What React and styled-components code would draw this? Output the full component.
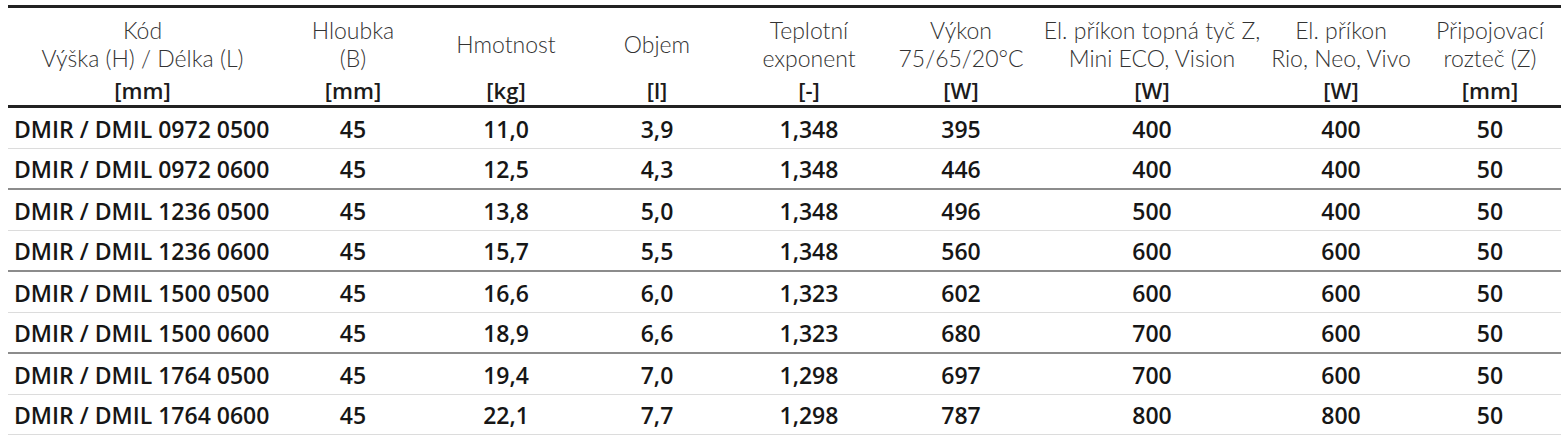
import styled, { createGlobalStyle } from "styled-components";

const GlobalStyle = createGlobalStyle`
  html, body {
    margin: 0;
    padding: 0;
    background: #ffffff;
    overflow: hidden;
  }
  body {
    font-family: "Open Sans", "Noto Sans", sans-serif;
    color: #1b1b1b;
  }
`;

const Wrapper = styled.div`
  padding: 5px 0 0 8px;
  width: 1561px;
  box-sizing: border-box;
`;

const Table = styled.table`
  width: 1559px;
  table-layout: fixed;
  border-collapse: collapse;
  border-top: 3px solid #222;
`;

const NameCell = styled.th`
  height: 71px;
  padding: 0 2px;
  font-family: "Lato", "Open Sans", sans-serif;
  font-weight: 300;
  font-size: 23px;
  line-height: 28px;
  color: #333;
  text-align: center;
  vertical-align: middle;
  white-space: nowrap;
`;

const UnitCell = styled.th`
  height: 22px;
  padding: 0 4px 4px;
  font-weight: 600;
  font-size: 22px;
  line-height: 22px;
  color: #1b1b1b;
  text-align: center;
  vertical-align: middle;
  border-bottom: 3px solid #222;
`;

const Row = styled.tr`
  border-bottom: ${(p) => (p.$group ? "2px solid #8c8c8c" : "1px solid #dcdcdc")};
`;

const Cell = styled.td`
  height: 37.5px;
  padding: 2px 6px 0;
  font-weight: 600;
  font-size: 23px;
  color: #161616;
  text-align: ${(p) => (p.$left ? "left" : "center")};
  vertical-align: middle;
  white-space: nowrap;
`;

const widths = [269, 152, 154, 148, 156, 148, 234, 144, 154];

const headers = [
  { name: ["Kód", "Výška (H) / Délka (L)"], unit: "[mm]" },
  { name: ["Hloubka", "(B)"], unit: "[mm]" },
  { name: ["Hmotnost"], unit: "[kg]" },
  { name: ["Objem"], unit: "[l]" },
  { name: ["Teplotní", "exponent"], unit: "[-]" },
  { name: ["Výkon", "75/65/20°C"], unit: "[W]" },
  { name: ["El. příkon topná tyč Z,", "Mini ECO, Vision"], unit: "[W]" },
  { name: ["El. příkon", "Rio, Neo, Vivo"], unit: "[W]" },
  { name: ["Připojovací", "rozteč (Z)"], unit: "[mm]" },
];

const rows = [
  ["DMIR / DMIL 0972 0500", "45", "11,0", "3,9", "1,348", "395", "400", "400", "50"],
  ["DMIR / DMIL 0972 0600", "45", "12,5", "4,3", "1,348", "446", "400", "400", "50"],
  ["DMIR / DMIL 1236 0500", "45", "13,8", "5,0", "1,348", "496", "500", "400", "50"],
  ["DMIR / DMIL 1236 0600", "45", "15,7", "5,5", "1,348", "560", "600", "600", "50"],
  ["DMIR / DMIL 1500 0500", "45", "16,6", "6,0", "1,323", "602", "600", "600", "50"],
  ["DMIR / DMIL 1500 0600", "45", "18,9", "6,6", "1,323", "680", "700", "600", "50"],
  ["DMIR / DMIL 1764 0500", "45", "19,4", "7,0", "1,298", "697", "700", "600", "50"],
  ["DMIR / DMIL 1764 0600", "45", "22,1", "7,7", "1,298", "787", "800", "800", "50"],
];

export default function App() {
  return (
    <>
      <GlobalStyle />
      <Wrapper>
        <Table>
          <colgroup>
            {widths.map((w, i) => (
              <col key={i} style={{ width: w }} />
            ))}
          </colgroup>
          <thead>
            <tr>
              {headers.map((h, i) => (
                <NameCell key={i}>
                  {h.name.map((line, j) => (
                    <div key={j}>{line}</div>
                  ))}
                </NameCell>
              ))}
            </tr>
            <tr>
              {headers.map((h, i) => (
                <UnitCell key={i}>{h.unit}</UnitCell>
              ))}
            </tr>
          </thead>
          <tbody>
            {rows.map((r, i) => (
              <Row key={i} $group={i % 2 === 1 && i < rows.length - 1}>
                {r.map((v, j) => (
                  <Cell key={j} $left={j === 0}>
                    {v}
                  </Cell>
                ))}
              </Row>
            ))}
          </tbody>
        </Table>
      </Wrapper>
    </>
  );
}
